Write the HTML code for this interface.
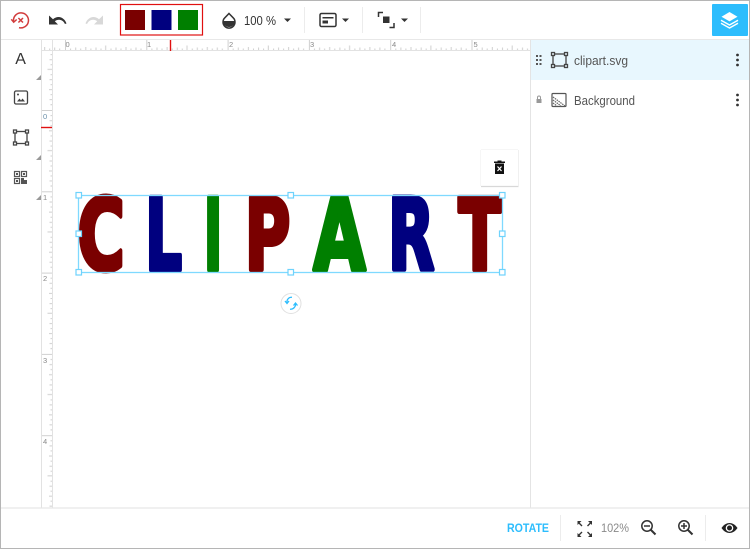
<!DOCTYPE html>
<html lang="en"><head><meta charset="utf-8"><title>Clipart editor</title>
<style>html,body{margin:0;padding:0;background:#fff}svg{display:block}text{font-family:"Liberation Sans",sans-serif}
text.d{font-family:"DejaVu Sans",sans-serif;font-weight:700;font-size:98.8px;stroke-linejoin:round;stroke-width:5px}</style>
</head><body>
<svg width="750" height="549" viewBox="0 0 750 549" xmlns="http://www.w3.org/2000/svg">
<defs>
<pattern id="hr" x="65" y="39" width="81.3" height="12" patternUnits="userSpaceOnUse">
<path d="M0.5 0V12" stroke="#d0d0d0" fill="none"/>
<path d="M5.6 9.500V11M10.700 8.500V11M15.700 9.500V11M20.800 8V11M25.900 9.500V11M31 8.500V11M36 9.500V11M40.700 6.500V11M46 9.500V11M51 8.500V11M56 9.500V11M61 8V11M66 9.500V11M71 8.500V11M76 9.500V11" stroke="#cfcfcf" fill="none"/>
</pattern>
<pattern id="vr" x="41" y="28.700" width="12" height="81.3" patternUnits="userSpaceOnUse">
<path d="M0 0.5H12" stroke="#d0d0d0" fill="none"/>
<path d="M9.500 5.600H11M8.500 10.700H11M9.500 15.700H11M8 20.800H11M9.500 25.900H11M8.500 31H11M9.500 36H11M6.500 40.700H11M9.500 46H11M8.500 51H11M9.500 56H11M8 61H11M9.500 66H11M8.500 71H11M9.500 76H11" stroke="#cfcfcf" fill="none"/>
</pattern>
</defs>
<rect width="750" height="549" fill="#fff"/>

<!-- panel -->
<rect x="531" y="40" width="218" height="40" fill="#e8f7fe"/>
<path d="M530.500 40V508" stroke="#e4e4e4"/>

<!-- rulers -->
<rect x="41" y="39" width="489" height="12" fill="url(#hr)"/>
<rect x="41" y="51" width="12" height="457" fill="url(#vr)"/>
<path d="M41 39.500H530M41 50.500H530M41.500 39V508M52.500 39V508" stroke="#e2e2e2" fill="none"/>
<path d="M170.500 39V51" stroke="#e01010" stroke-width="1.400"/>
<path d="M41 127.500H52" stroke="#e01010" stroke-width="1.400"/>
<g font-size="7.500" fill="#888">
<text x="65.500" y="47">0</text><text x="147" y="47">1</text><text x="229" y="47">2</text><text x="310" y="47">3</text><text x="392" y="47">4</text><text x="473.500" y="47">5</text>
<text x="43" y="119" fill="#6a8fa8">0</text><text x="43" y="200">1</text><text x="43" y="281">2</text><text x="43" y="363">3</text><text x="43" y="444">4</text>
</g>

<!-- toolbar -->
<path d="M0 39.500H750" stroke="#e8e8e8"/>
<!-- reset -->
<g fill="none" stroke="#d23c3c">
<path d="M13.500 21A7.500 7.500 0 1 1 19 27.600" stroke-width="1.500"/>
<path d="M11.300 19.300L13.700 22.200L16.700 19.500" stroke-width="1.500"/>
<path d="M18.400 18L23 22.500M23 18L18.400 22.500" stroke-width="1.500"/>
</g>
<!-- undo -->
<path d="M49 15.500V24.500H58L54.800 21.300C56 20.300 57.500 19.700 59 19.700C61.800 19.700 64 21.500 64.900 24L66.500 23.500C65.400 20 62.200 17 58.600 17C56.500 17 54.600 17.800 53 19.300Z" fill="#333"/>
<!-- redo -->
<path d="M103 15.500V24.500H94L97.200 21.300C96 20.300 94.500 19.700 93 19.700C90.200 19.700 88 21.500 87.100 24L85.500 23.500C86.600 20 89.800 17 93.400 17C95.500 17 97.400 17.800 99 19.300Z" fill="#d8d8d8"/>
<!-- swatches -->
<rect x="120.500" y="4.500" width="82" height="30.500" fill="#fff" stroke="#e01010" stroke-width="1.200"/>
<rect x="125" y="10" width="20" height="20" fill="#7a0000"/>
<rect x="151.500" y="10" width="20" height="20" fill="#00007f"/>
<rect x="178" y="10" width="20" height="20" fill="#007f00"/>
<!-- opacity -->
<path d="M229 13.500L233.200 17.800A6 6 0 1 1 224.800 17.800Z" fill="none" stroke="#333" stroke-width="1.500"/>
<path d="M223 21H235A6 6 0 0 1 223 21Z" fill="#333"/>
<text x="244" y="25" font-size="13" fill="#333" textLength="32" lengthAdjust="spacingAndGlyphs">100 %</text>
<path d="M284 18.500H291L287.500 22Z" fill="#333"/>
<path d="M304.500 7V33M362.500 7V33M420.500 7V33" stroke="#ececec"/>
<!-- align -->
<rect x="320" y="13.500" width="16" height="13" rx="1.500" fill="none" stroke="#333" stroke-width="1.500"/>
<path d="M322.500 17H333.500V18.500H322.500ZM322.500 20.500H328V23.500H322.500Z" fill="#333"/>
<path d="M342 18.500H349L345.500 22Z" fill="#333"/>
<!-- arrange -->
<path d="M378.500 17V12.500H383M394 23V27.500H389.500" fill="none" stroke="#333" stroke-width="1.500"/>
<rect x="383" y="16.500" width="6.500" height="6.500" fill="#333"/>
<path d="M401 18.500H408L404.500 22Z" fill="#333"/>
<!-- layers btn -->
<rect x="712" y="4" width="36" height="32" rx="1" fill="#2dbdfd"/>
<path d="M729.500 12L737.500 16.700L729.500 21.400L721.500 16.700Z" fill="#fff"/>
<g fill="none" stroke="#fff" stroke-width="1.400" stroke-linejoin="round">
<path d="M721 20.300L729.500 25L738 20.300"/>
<path d="M721 23.300L729.500 28L738 23.300"/>
</g>

<!-- left tools -->
<text x="15.300" y="64" font-size="16" fill="#333">A</text>
<path d="M41 75V80H36ZM41 155V160H36ZM41 195V200H36Z" fill="#999"/>
<rect x="14.500" y="91" width="13" height="13" rx="1.500" fill="none" stroke="#444" stroke-width="1.300"/>
<circle cx="18" cy="94.500" r="1" fill="#444"/><path d="M17 101.500L19.500 98.500L21 100.500L22.500 98.500L25 101.500Z" fill="#444"/>
<g fill="none" stroke="#444" stroke-width="1.300">
<rect x="15" y="131.500" width="12" height="12"/>
<rect x="13.500" y="130" width="3" height="3" fill="#fff"/><rect x="25.500" y="130" width="3" height="3" fill="#fff"/>
<rect x="13.500" y="142" width="3" height="3" fill="#fff"/><rect x="25.500" y="142" width="3" height="3" fill="#fff"/>
</g>
<g fill="none" stroke="#555" stroke-width="1.200">
<rect x="14.500" y="171.500" width="5" height="5"/><rect x="21.500" y="171.500" width="5" height="5"/><rect x="14.500" y="178.500" width="5" height="5"/>
</g>
<path d="M16 173H18V175H16ZM23 173H25V175H23ZM16 180H18V182H16ZM21 178H24V180H27V184H21Z" fill="#555"/>

<!-- clipart letters (real text, stretched) -->
<text class="d" transform="translate(77.400 269.500) scale(.655 1)" fill="#7a0000" stroke="#7a0000">C</text>
<text class="d" transform="translate(145.100 269.500) scale(.587 1)" fill="#00007f" stroke="#00007f">L</text>
<text class="d" transform="translate(203.700 269.500) scale(.507 1)" fill="#007f00" stroke="#007f00">I</text>
<text class="d" transform="translate(244.700 269.500) scale(.63 1)" fill="#7a0000" stroke="#7a0000">P</text>
<text class="d" transform="translate(313.400 269.500) scale(.682 1)" fill="#007f00" stroke="#007f00">A</text>
<text class="d" transform="translate(388 269.500) scale(.61 1)" fill="#00007f" stroke="#00007f">R</text>
<text class="d" transform="translate(458.500 269.500) scale(.63 1)" fill="#7a0000" stroke="#7a0000">T</text>

<!-- selection -->
<rect x="78.500" y="195.500" width="424" height="77" fill="none" stroke="#7fd9ff" stroke-width="1.300"/>
<g fill="#fff" stroke="#6ed3fc" stroke-width="1.200">
<rect x="76" y="192.500" width="5.500" height="5.500"/><rect x="288" y="192.500" width="5.500" height="5.500"/><rect x="499.500" y="192.500" width="5.500" height="5.500"/>
<rect x="76" y="231" width="5.500" height="5.500"/><rect x="499.500" y="231" width="5.500" height="5.500"/>
<rect x="76" y="269.500" width="5.500" height="5.500"/><rect x="288" y="269.500" width="5.500" height="5.500"/><rect x="499.500" y="269.500" width="5.500" height="5.500"/>
</g>
<!-- rotate handle -->
<circle cx="291" cy="303.500" r="10" fill="#fff" stroke="#e0e0e0"/>
<g fill="none" stroke="#2dbdfd" stroke-width="1.300">
<path d="M287 303C286.500 299.500 289 297 292 297.300M295.500 303.500C296 307 293 309.500 290 309.200"/>
<path d="M285 301L287 303.500L289 301M293.500 305.500L295.500 303L297.500 305.500"/>
</g>
<!-- delete -->
<rect x="481" y="150" width="37.500" height="36.500" rx="1.500" fill="#fff"/>
<path d="M481 186.500H518.500" stroke="#d8d8d8" stroke-width="1.200"/>
<path d="M518.500 150V186" stroke="#f0f0f0"/><path d="M480.500 150V186" stroke="#f6f6f6"/><path d="M481 149.500H518" stroke="#f6f6f6"/>
<path d="M495 163.500H504V174H495ZM494 161.500H505V163H494ZM497.500 160.500H501.500V161.500H497.500Z" fill="#111"/>
<path d="M497.500 166.500L501.500 171M501.500 166.500L497.500 171" stroke="#fff" stroke-width="1.200"/>

<!-- layers panel -->
<g fill="#555">
<rect x="536" y="55" width="2" height="2"/><rect x="539.500" y="55" width="2" height="2"/>
<rect x="536" y="59" width="2" height="2"/><rect x="539.500" y="59" width="2" height="2"/>
<rect x="536" y="63" width="2" height="2"/><rect x="539.500" y="63" width="2" height="2"/>
</g>
<g fill="none" stroke="#444" stroke-width="1.300">
<rect x="553" y="54" width="13" height="12"/>
<rect x="551.500" y="52.500" width="3" height="3" fill="#e8f7fe"/><rect x="564.500" y="52.500" width="3" height="3" fill="#e8f7fe"/>
<rect x="551.500" y="64.500" width="3" height="3" fill="#e8f7fe"/><rect x="564.500" y="64.500" width="3" height="3" fill="#e8f7fe"/>
</g>
<text x="574" y="65" font-size="12.500" fill="#555" textLength="54" lengthAdjust="spacingAndGlyphs">clipart.svg</text>
<g fill="#333"><circle cx="737.500" cy="55" r="1.400"/><circle cx="737.500" cy="60" r="1.400"/><circle cx="737.500" cy="65" r="1.400"/>
<circle cx="737.500" cy="95" r="1.400"/><circle cx="737.500" cy="100" r="1.400"/><circle cx="737.500" cy="105" r="1.400"/></g>
<rect x="536.500" y="99" width="5" height="4" fill="#999"/><path d="M537.500 99V97.500A1.500 1.500 0 0 1 540.500 97.500V99" fill="none" stroke="#999"/>
<rect x="552" y="93.500" width="14" height="13" rx="1" fill="none" stroke="#555" stroke-width="1.200"/>
<path d="M553 97L565 106M553 100L561 106M553 103L557 106" stroke="#666" stroke-width="1.200" stroke-dasharray="1.500 .8" fill="none"/>
<text x="574" y="105" font-size="12.500" fill="#555" textLength="61" lengthAdjust="spacingAndGlyphs">Background</text>

<!-- bottom bar -->
<path d="M0 508H750" stroke="#e6e6e6" stroke-width="1.200"/>
<path d="M560.500 515V541M705.500 515V541" stroke="#ececec"/>
<text x="507" y="532" font-size="11.500" font-weight="700" fill="#2dbdfd" textLength="42" lengthAdjust="spacingAndGlyphs">ROTATE</text>
<path d="M578.500 522.500L582 526M591 522.500L587.500 526M578.500 535.500L582 532M591 535.500L587.500 532" fill="none" stroke="#333" stroke-width="1.400"/>
<path d="M577.500 521H581.500L577.500 525ZM592 521V525L588 521ZM577.500 537V533L581.500 537ZM592 537H588L592 533Z" fill="#333"/>
<text x="601" y="532" font-size="12" fill="#8a8a8a" textLength="28" lengthAdjust="spacingAndGlyphs">102%</text>
<g fill="none" stroke="#333" stroke-width="1.500">
<circle cx="647" cy="526" r="5.200"/><path d="M651 530L655.500 534.500" stroke-width="2"/><path d="M644 526H650"/>
<circle cx="684" cy="526" r="5.200"/><path d="M688 530L692.500 534.500" stroke-width="2"/><path d="M681 526H687M684 523V529"/>
</g>
<path d="M721.500 528C724 524.300 727 523 729.500 523C732 523 735 524.300 737.500 528C735 531.700 732 533 729.500 533C727 533 724 531.700 721.500 528Z" fill="#222"/>
<circle cx="729.500" cy="528" r="3.800" fill="#fff"/><circle cx="729.500" cy="528" r="2.500" fill="#222"/>

<!-- outer frame -->
<path d="M.5 549V.5H749.500V549M0 548.500H750" fill="none" stroke="#b5b5b5"/>
</svg>
</body></html>
